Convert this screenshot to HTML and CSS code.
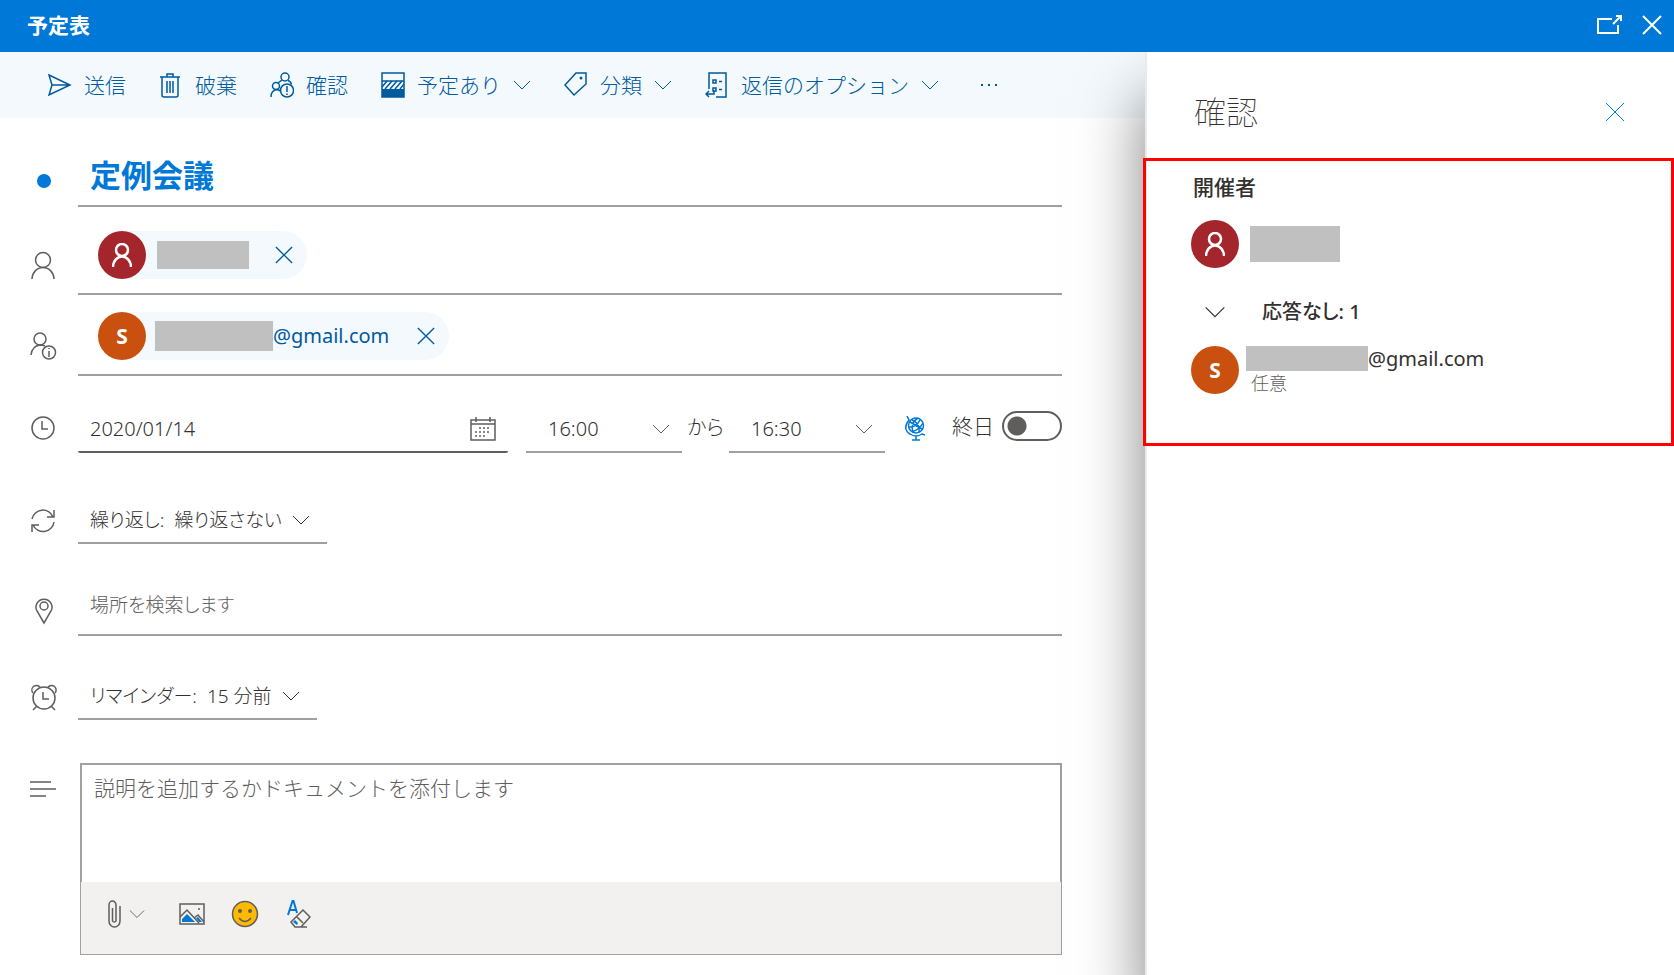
FILE: index.html
```
<!DOCTYPE html>
<html lang="ja">

<head>
    <meta charset="utf-8">
    <title>予定表</title>
    <link rel="stylesheet" href="styles.css">
</head>

<body>
    <svg width="0" height="0" class="symbols">
        <symbol id="chevron" viewBox="0 0 18 12"><path d="M1 2l8 8 8-8" /></symbol>
        <symbol id="cross" viewBox="0 0 20 20"><path d="M1 1l18 18M19 1L1 19" /></symbol>
        <symbol id="person" viewBox="0 0 26 28"><circle cx="13" cy="9" r="7.5" /><path d="M2 28a11 11.5 0 0 1 22 0" /></symbol>
    </svg>

    <header class="title-bar">
        <h1>予定表</h1>
        <button type="button" aria-label="新しいウィンドウで開く">
            <svg width="26" height="20" viewBox="0 0 26 20"><path d="M15 4H1v14h20V10M16 9l7-7M19 1h5v5" /></svg>
        </button>
        <button type="button" aria-label="閉じる"><svg width="20" height="20"><use href="#cross" /></svg></button>
    </header>

    <div class="layout">
        <main>
            <div class="toolbar">
                <button type="button">
                    <svg width="24" height="24" viewBox="0 0 24 24"><path d="M1 2l21 10L1 22l3-10zM4 12h18" /></svg>
                    送信
                </button>
                <button type="button">
                    <svg width="24" height="26" viewBox="-1 0 24 26"><path d="M0 5h20M2 5v18q0 2 2 2h12q2 0 2-2V5M7 5V2h6v3M7 9v12M10 9v12M13 9v12" /></svg>
                    破棄
                </button>
                <button type="button">
                    <svg width="24" height="26" viewBox="0 0 24 26"><circle cx="15" cy="5" r="4" /><circle cx="6" cy="14" r="3.5" /><circle cx="17" cy="18.500" r="6.500" /><path d="M1 25q0-6 5-7.500q3 0 5 2M8 11l4-3M18 8.500q3 1 3.500 4M17 14v6M17 21.500v1.500" /></svg>
                    確認
                </button>
                <button type="button" class="menu">
                    <svg width="24" height="26" viewBox="0 0 24 26"><path d="M1 1h22v24H1zM1 9h22" /><path class="solid" d="M1 17h22v8H1z" /><path d="M1 15l5-6M4 17l7-8M9 17l7-8M14 17l7-8M19 17l4-5" /></svg>
                    予定あり
                    <svg class="chevron" width="18" height="12"><use href="#chevron" /></svg>
                </button>
                <button type="button" class="menu">
                    <svg width="24" height="26" viewBox="0 0 24 26"><path d="M12 1h10v11L10 23 1 13z" /><circle class="solid" cx="17" cy="6" r="1.5" /></svg>
                    分類
                    <svg class="chevron" width="18" height="12"><use href="#chevron" /></svg>
                </button>
                <button type="button" class="menu">
                    <svg width="24" height="26" viewBox="0 0 24 26"><path d="M4 17V1h17v24H11M8 8h3v3H8zM8 16h3v3H8zM14 9.500h3M14 17.500h3M1 22h8v-3M4 19l-3 3 3 3" /></svg>
                    返信のオプション
                    <svg class="chevron" width="18" height="12"><use href="#chevron" /></svg>
                </button>
                <button type="button" class="more" aria-label="その他">
                    <svg width="18" height="4" viewBox="0 0 18 4"><path class="solid" d="M1 1h2v2H1zM8 1h2v2H8zM15 1h2v2h-2z" /></svg>
                </button>
            </div>

            <form>
                <div class="row subject">
                    <span class="dot"></span>
                    <input type="text" class="line" aria-label="タイトル" value="定例会議">
                </div>

                <div class="row people">
                    <svg class="icon" width="26" height="28"><use href="#person" /></svg>
                    <div class="line">
                        <div class="chip">
                            <span class="avatar red"><svg width="20" height="24" viewBox="0 0 20 24"><circle cx="10" cy="7" r="6" /><path d="M1 24a9 10.500 0 0 1 18 0" /></svg></span>
                            <span class="mask"></span>
                            <button type="button" aria-label="削除"><svg width="18" height="18" viewBox="0 0 20 20"><use href="#cross" /></svg></button>
                        </div>
                    </div>
                </div>

                <div class="row people optional">
                    <svg class="icon" width="28" height="28" viewBox="0 0 28 28"><circle cx="10" cy="7" r="6" /><path d="M1 23q1-9 9-10q3 0 5 1M19 19v6M19 16v1" /><circle cx="19" cy="20.500" r="6.500" /></svg>
                    <div class="line">
                        <div class="chip">
                            <span class="avatar orange">S</span>
                            <span class="mask"></span>
                            <span>@gmail.com</span>
                            <button type="button" aria-label="削除"><svg width="18" height="18" viewBox="0 0 20 20"><use href="#cross" /></svg></button>
                        </div>
                    </div>
                </div>

                <div class="row time">
                    <svg class="icon" width="26" height="26" viewBox="0 0 26 26"><circle cx="13" cy="13" r="11" /><path d="M12 6v8h6" /></svg>
                    <div class="time-fields">
                        <div class="line date">
                            <input type="text" aria-label="開始日" value="2020/01/14">
                            <svg width="26" height="24" viewBox="0 0 26 24"><path d="M1 3h24v20H1zM1 7h24M6 0v5M20 0v5" /><path stroke-dasharray="2 2" d="M9 11h12M5 15h16M5 19h12" /></svg>
                        </div>
                        <div class="line clock">
                            <select aria-label="開始時刻"><option>16:00</option></select>
                            <svg width="18" height="12"><use href="#chevron" /></svg>
                        </div>
                        <span class="from">から</span>
                        <div class="line clock">
                            <select aria-label="終了時刻"><option>16:30</option></select>
                            <svg width="18" height="12"><use href="#chevron" /></svg>
                        </div>
                        <button type="button" class="globe" aria-label="タイムゾーン">
                            <svg width="22" height="25" viewBox="0 0 22 25"><circle cx="12" cy="9.500" r="7.500" /><path d="M3 0l2 4q-7 9 1 14q6 4 12 0l3 1M12 20v4M8 24h8M6 6l12 7M5 11q7 1 11-7M8 16q8-3 11-9M8 4q8 3 7 12M14 2Q6 7 9 16" /></svg>
                        </button>
                        <label class="all-day">終日 <input type="checkbox" role="switch"></label>
                    </div>
                </div>

                <div class="row repeat">
                    <svg class="icon" width="26" height="26" viewBox="0 0 26 26"><path d="M2 11a11 11 0 0 1 21-2M24 2v7h-7M24 14a11 11 0 0 1-21 3M2 24v-7h7" /></svg>
                    <button type="button" class="line"><span>繰り返し:</span> <span>繰り返さない</span> <svg width="18" height="12"><use href="#chevron" /></svg></button>
                </div>

                <div class="row place">
                    <svg class="icon" width="26" height="28" viewBox="0 0 26 28"><path d="M14 26L7 14a8 8 0 1 1 14 0z" /><circle cx="14" cy="9" r="4" /></svg>
                    <input type="text" class="line" aria-label="場所" placeholder="場所を検索します">
                </div>

                <div class="row reminder">
                    <svg class="icon" width="28" height="28" viewBox="0 0 28 28"><circle cx="14" cy="14" r="11" /><path d="M13 8v7h6M3 9a4 4 0 1 1 7-6M25 9a4 4 0 1 0-7-6M7 22l-4 4M21 22l4 4" /></svg>
                    <button type="button" class="line"><span>リマインダー:</span> <span>15 分前</span> <svg width="18" height="12"><use href="#chevron" /></svg></button>
                </div>

                <div class="row body">
                    <svg class="icon" width="28" height="18" viewBox="0 0 28 18"><path d="M0 2h21M0 9h26M0 16h16" /></svg>
                    <div class="editor">
                        <textarea aria-label="説明" placeholder="説明を追加するかドキュメントを添付します"></textarea>
                        <div class="editor-tools">
                            <button type="button" class="attach" aria-label="添付">
                                <svg width="14" height="28" viewBox="0 0 14 28"><path d="M13 6v15a5.500 6 0 0 1-11 0V5a3.500 4 0 0 1 7 0v16a2 2 0 0 1-3.500 0V8" /></svg>
                                <svg width="16" height="12" viewBox="0 0 18 12"><use href="#chevron" /></svg>
                            </button>
                            <button type="button" aria-label="画像">
                                <svg width="26" height="22" viewBox="0 0 26 22"><path d="M1 1h24v20H1z" /><path class="blue" d="M3 19v-3l5-5 8 8zM17 15l2-1 4 5h-3z" /><path d="M1 14l7-7 12 13M15 15l4-3 6 7M19 6h2" /></svg>
                            </button>
                            <button type="button" aria-label="絵文字">
                                <svg width="28" height="28" viewBox="0 0 28 28"><circle class="face" cx="14" cy="14" r="12.500" /><circle class="solid" cx="9" cy="11" r="2" /><circle class="solid" cx="19" cy="11" r="2" /><path d="M8 18q6 7 12 0" /></svg>
                            </button>
                            <button type="button" aria-label="書式のクリア">
                                <svg width="24" height="28" viewBox="0 0 24 28"><path class="letter" d="M1 15L5.500 1h1L10 13M3 10h6" /><path d="M16 10l7 7-9 10H8l-4-5zM9 16l7 7M12 27h8" /><path class="blue" d="M8 20l3 3-1 2-4-3z" /></svg>
                            </button>
                        </div>
                    </div>
                </div>
            </form>
        </main>

        <aside>
            <div class="panel-head">
                <h2>確認</h2>
                <button type="button" aria-label="閉じる"><svg width="20" height="20"><use href="#cross" /></svg></button>
            </div>
            <section class="tracking">
                <h3>開催者</h3>
                <div class="person">
                    <span class="avatar red"><svg width="20" height="24" viewBox="0 0 20 24"><circle cx="10" cy="7" r="6" /><path d="M1 24a9 10.500 0 0 1 18 0" /></svg></span>
                    <span class="mask"></span>
                </div>
                <button type="button" class="group"><svg width="22" height="14"><use href="#chevron" /></svg> 応答なし: 1</button>
                <div class="person guest">
                    <span class="avatar orange">S</span>
                    <div>
                        <div class="mail"><span class="mask"></span>@gmail.com</div>
                        <small>任意</small>
                    </div>
                </div>
            </section>
        </aside>
    </div>
</body>

</html>
```

FILE: styles.css
```
* {
    box-sizing: border-box;
}

body {
    margin: 0;
    min-height: 100vh;
    display: flex;
    flex-direction: column;
    font-family: "Noto Sans", "Noto Sans CJK JP", sans-serif;
    font-size: 20px;
    line-height: 30px;
    color: #323130;
    background-color: white;
}

button,
input,
select,
textarea {
    font: inherit;
    color: inherit;
    border: 0;
    padding: 0;
    margin: 0;
    background: none;
    outline: none;
}

svg {
    fill: none;
    stroke: currentColor;
    stroke-width: 1.5;
    flex: none;
}

.symbols {
    position: absolute;
}

.solid {
    fill: currentColor;
    stroke: none;
}

.blue {
    fill: #0078d4;
    stroke: none;
}

.title-bar {
    display: flex;
    align-items: center;
    gap: 19px;
    height: 52px;
    padding: 0 12px 2px 27px;
    color: white;
    background-color: #0078d7;
}

.title-bar h1 {
    flex: 1;
    margin: 0;
    font-size: 21px;
}

.title-bar button,
.panel-head button,
.chip button {
    display: flex;
}

.title-bar svg {
    stroke-width: 2;
}

.layout {
    flex: 1;
    display: flex;
    overflow: hidden;
}

main {
    flex: 1;
    min-width: 0;
}

.toolbar {
    display: flex;
    align-items: center;
    gap: 33px;
    height: 66px;
    padding-left: 48px;
    font-size: 21px;
    font-weight: 300;
    color: #005a9e;
    background-color: #f3f9fd;
}

.toolbar button {
    display: flex;
    align-items: center;
    gap: 12px;
    white-space: nowrap;
}

.toolbar .chevron {
    stroke-width: 1;
}

.toolbar .more {
    margin-left: 8px;
}

form {
    padding: 32px 83px 20px 0;
    font-weight: 300;
}

.row {
    display: grid;
    grid-template-columns: 78px minmax(0, 1fr);
    align-items: start;
}

.icon {
    margin-left: 30px;
    color: #605e5c;
}

.line {
    border-bottom: 2px solid #a0a0a0;
}

.dot {
    width: 14px;
    height: 14px;
    margin: 24px 0 0 37px;
    border-radius: 50%;
    background-color: #0078d7;
}

.subject .line {
    height: 57px;
    padding: 0 12px 8px;
    font-size: 31px;
    font-weight: bold;
    color: #0078d7;
}

.people .icon {
    margin-top: 44px;
}

.people .line {
    height: 88px;
    padding: 24px 20px 0;
}

.optional .icon {
    margin-top: 37px;
}

.optional .line {
    height: 81px;
    padding-top: 17px;
}

.chip {
    display: inline-flex;
    align-items: center;
    height: 48px;
    padding-right: 14px;
    border-radius: 24px;
    color: #005a9e;
    background-color: #f3f9fd;
    font-weight: 400;
}

.chip button {
    margin-left: 26px;
}

.optional .chip button {
    margin-left: 28px;
}

.avatar {
    display: flex;
    align-items: center;
    justify-content: center;
    flex: none;
    width: 48px;
    height: 48px;
    border-radius: 50%;
    font-size: 21px;
    font-weight: bold;
    color: white;
}

.avatar svg {
    stroke-width: 2.5;
}

.red {
    background-color: #a4262c;
}

.orange {
    background-color: #ca5010;
}

.mask {
    background-color: #c0c0c0;
}

.chip .mask {
    width: 92px;
    height: 28px;
    margin-left: 11px;
}

.optional .chip .mask {
    width: 118px;
    height: 30px;
    margin-left: 9px;
}

.time {
    margin-top: 27px;
}

.time .icon {
    margin-top: 12px;
}

.time-fields {
    display: flex;
    align-items: center;
}

.time-fields .line {
    display: flex;
    align-items: center;
    height: 50px;
    padding-top: 3px;
}

.time-fields .date {
    flex: 1;
    min-width: 0;
    margin-right: 18px;
    padding-left: 12px;
    padding-right: 12px;
    border-color: #605e5c;
    border-radius: 2px;
}

.date input {
    flex: 1;
    min-width: 0;
}

.clock {
    width: 156px;
    padding: 0 12px 0 22px;
}

.clock select {
    flex: 1;
    appearance: none;
}

.time-fields svg {
    color: #605e5c;
}

.clock svg,
.repeat button svg,
.reminder button svg,
.panel-head svg,
.attach svg:last-child {
    stroke-width: 1;
}

.from {
    width: 47px;
    text-align: center;
    font-feature-settings: "palt";
}

.time-fields .globe {
    display: flex;
    margin: 0 26px 0 19px;
}

.time-fields .globe svg {
    color: #0078d7;
}

.all-day {
    display: flex;
    align-items: center;
    gap: 8px;
    margin-bottom: 4px;
    font-size: 21px;
}

.all-day input {
    appearance: none;
    width: 60px;
    height: 30px;
    border: 2px solid #605e5c;
    border-radius: 15px;
    background: radial-gradient(circle at 13px 13px, #605e5c 9px, transparent 10px);
}

/* proportional kana */
.repeat .line,
.place .line,
.reminder .line {
    font-size: 19px;
    font-feature-settings: "palt";
}

.repeat .line,
.reminder .line {
    display: flex;
    align-items: center;
    justify-self: start;
    gap: 10px;
    height: 46px;
    padding: 0 17px 0 12px;
}

.repeat {
    margin-top: 45px;
}

.repeat .icon {
    margin-top: 10px;
}

.place {
    margin-top: 36px;
}

.place .icon {
    margin-top: 17px;
}

.place .line {
    height: 56px;
    padding: 0 12px 4px;
}

::placeholder {
    color: #605e5c;
    opacity: 1;
}

.reminder {
    margin-top: 38px;
}

.reminder .icon {
    margin-top: 10px;
}

.body {
    margin-top: 43px;
}

.body .icon {
    margin-top: 17px;
}

.editor {
    margin-left: 2px;
    border: 1px solid #a0a0a0;
}

.editor textarea {
    display: block;
    width: 100%;
    height: 118px;
    padding: 8px 12px;
    border: 1px solid #a0a0a0;
    border-bottom: 0;
    font-size: 21px;
    resize: none;
}

.editor-tools {
    display: flex;
    align-items: center;
    gap: 26px;
    height: 72px;
    padding: 0 26px 8px;
    color: #605e5c;
    background-color: #f3f1f0;
}

.editor-tools button {
    display: flex;
    align-items: center;
}

.editor-tools .attach {
    gap: 8px;
    margin-right: 8px;
}

.editor-tools button:last-child {
    margin-left: 2px;
}

.face {
    fill: #ffb900;
}

.letter {
    stroke: #0078d4;
    stroke-width: 2;
}

aside {
    flex: 0 0 529px;
    border-left: 2px solid #eaeaea;
    background-color: white;
    box-shadow: 0 45px 60px rgba(0, 0, 0, 0.5);
}

.panel-head {
    display: flex;
    align-items: center;
    justify-content: space-between;
    height: 106px;
    padding: 14px 49px 0 47px;
}

.panel-head h2 {
    margin: 0;
    font-size: 32px;
    font-weight: 100;
}

.panel-head button {
    color: #0078d7;
}

.tracking {
    height: 288px;
    margin-left: -4px;
    padding: 11px 45px;
    border: 3px solid red;
}

.tracking h3 {
    margin: 0 0 18px 2px;
    font-size: 21px;
    font-weight: 500;
}

.person {
    display: flex;
    align-items: center;
}

.person > .mask {
    width: 90px;
    height: 36px;
    margin-left: 11px;
}

.group {
    display: flex;
    align-items: center;
    gap: 36px;
    margin: 29px 0 19px 13px;
    font-size: 20px;
    font-weight: 500;
    font-feature-settings: "palt";
}

.group svg {
    stroke-width: 1;
}

.guest {
    gap: 7px;
    align-items: start;
}

.mail {
    display: flex;
    align-items: center;
    height: 25px;
}

.mail .mask {
    width: 122px;
    height: 25px;
}

.guest small {
    display: block;
    padding-left: 5px;
    font-size: 18px;
    font-weight: 300;
    line-height: 24px;
    color: #605e5c;
}
```
